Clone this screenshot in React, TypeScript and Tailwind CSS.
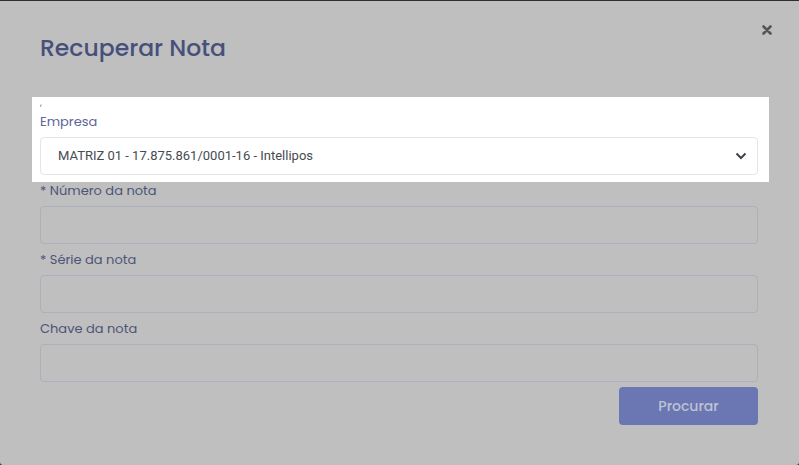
import React from "react";

const Field = ({ label }: { label: string }) => (
  <div className="flex flex-col">
    <div className="h-[20px] mb-[5px] text-[13px] leading-[20px] text-[#4c5479]">{label}</div>
    <div className="h-[38px] rounded-[4px] border border-[#adafbd]" />
  </div>
);

export default function App() {
  return (
    <div className="w-[799px] h-[465px] bg-[#2e2e2e] pt-px font-['Poppins','Open_Sans',sans-serif]">
      <div className="relative h-[464px] bg-[#bfbfbf] rounded-b-[3px] pl-10 pr-[41px] pt-[29px]">
        <button className="absolute right-[27px] top-[24px] w-[10px] h-[10px] flex items-center justify-center">
          <svg width="10" height="10" viewBox="0 0 10 10">
            <path d="M1.5 1.5 L8.5 8.5 M8.5 1.5 L1.5 8.5" stroke="#555555" strokeWidth="2.6" strokeLinecap="round" />
          </svg>
        </button>
        <h1 className="text-[23.5px] leading-[36px] font-medium text-[#46507b]">Recuperar Nota</h1>
        <div className="relative mt-[31px] -ml-2 -mr-[11px] pl-2 pr-[11px] bg-white pb-[7px] mb-[-7px] flex flex-col">
          <div className="h-[15px] text-[9px] leading-[12px] text-[#5c6697]">,</div>
          <div className="h-[20px] mb-[5px] text-[13px] leading-[20px] text-[#5c6697]">Empresa</div>
          <div className="h-[38px] rounded-[4px] border border-[#e3e5ec] flex items-center pl-[17px] pr-[10px] justify-between">
            <span className="font-['Roboto',sans-serif] text-[13px] text-[#464b52]">MATRIZ 01 - 17.875.861/0001-16 - Intellipos</span>
            <svg width="12" height="8" viewBox="0 0 12 8">
              <path d="M1.5 1.5 L6 6 L10.5 1.5" fill="none" stroke="#3e434b" strokeWidth="2" />
            </svg>
          </div>
        </div>
        <div className="relative mt-[6px] flex flex-col gap-[6px]">
          <Field label="* Número da nota" />
          <Field label="* Série da nota" />
          <Field label="Chave da nota" />
        </div>
        <div className="mt-[5px] flex justify-end">
          <button className="w-[139px] h-[38px] rounded-[4px] bg-[#6b77b3] text-[14px] font-medium text-[#bfc2d4]">Procurar</button>
        </div>
      </div>
    </div>
  );
}
